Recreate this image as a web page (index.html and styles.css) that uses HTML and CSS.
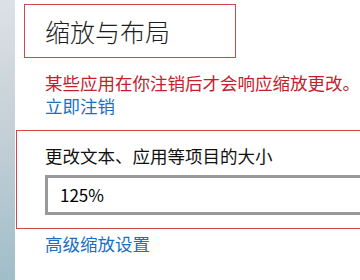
FILE: index.html
```html
<!DOCTYPE html>
<html lang="zh-CN">
<head>
  <meta charset="UTF-8" />
  <title>缩放与布局</title>
  <link rel="stylesheet" href="styles.css">
</head>
<body>
  <div class="sidebar"></div>

  <div class="main">
    <div class="title-box">
      <h2>缩放与布局</h2>
    </div>

    <p class="warning">某些应用在你注销后才会响应缩放更改。</p>
    <a class="link" href="#">立即注销</a>

    <div class="scale-box">
      <label for="scale">更改文本、应用等项目的大小</label>
      <div class="select" id="scale">125%</div>
    </div>

    <a class="link advanced" href="#">高级缩放设置</a>
  </div>
</body>
</html>
```

FILE: styles.css
```css
body {
  margin: 0;
  display: flex;
  height: 280px;
  overflow: hidden;
  background: #fff;
  font-family: "Noto Sans CJK SC", "Noto Sans", sans-serif;
  color: #000;
}
.sidebar {
  width: 15px;
  flex-shrink: 0;
  background: linear-gradient(#dce1e6, #c3ced6 50%, #a0bec8);
}
.main {
  flex: 1;
  min-width: 0;
  padding-left: 1px;
}
.title-box {
  margin: 4px 0 0 8px;
  width: 210px;
  height: 52px;
  border: 1px solid #d0474d;
  display: flex;
  align-items: center;
}
.title-box h2 {
  margin: 0 0 0 20px;
  font-size: 25px;
  font-weight: 300;
  color: #1e1e1e;
}
.warning {
  margin: 13px 0 0 29px;
  font-size: 17.5px;
  line-height: 23px;
  color: #c4202b;
  white-space: nowrap;
}
.link {
  display: block;
  margin-left: 29px;
  font-size: 17.5px;
  line-height: 23px;
  color: #1a6fc0;
  text-decoration: none;
}
.scale-box {
  margin-top: 13px;
  padding: 13px 0 13px 28px;
  border: 1px solid #d0474d;
  border-right: none;
}
.scale-box label {
  display: block;
  font-size: 17.5px;
  line-height: 23px;
  color: #111;
}
.select {
  margin-top: 8px;
  height: 34px;
  border: 3px solid #999;
  border-right: none;
  padding-left: 12px;
  font-size: 17px;
  line-height: 34px;
}
.advanced {
  margin-top: 3px;
}
```
